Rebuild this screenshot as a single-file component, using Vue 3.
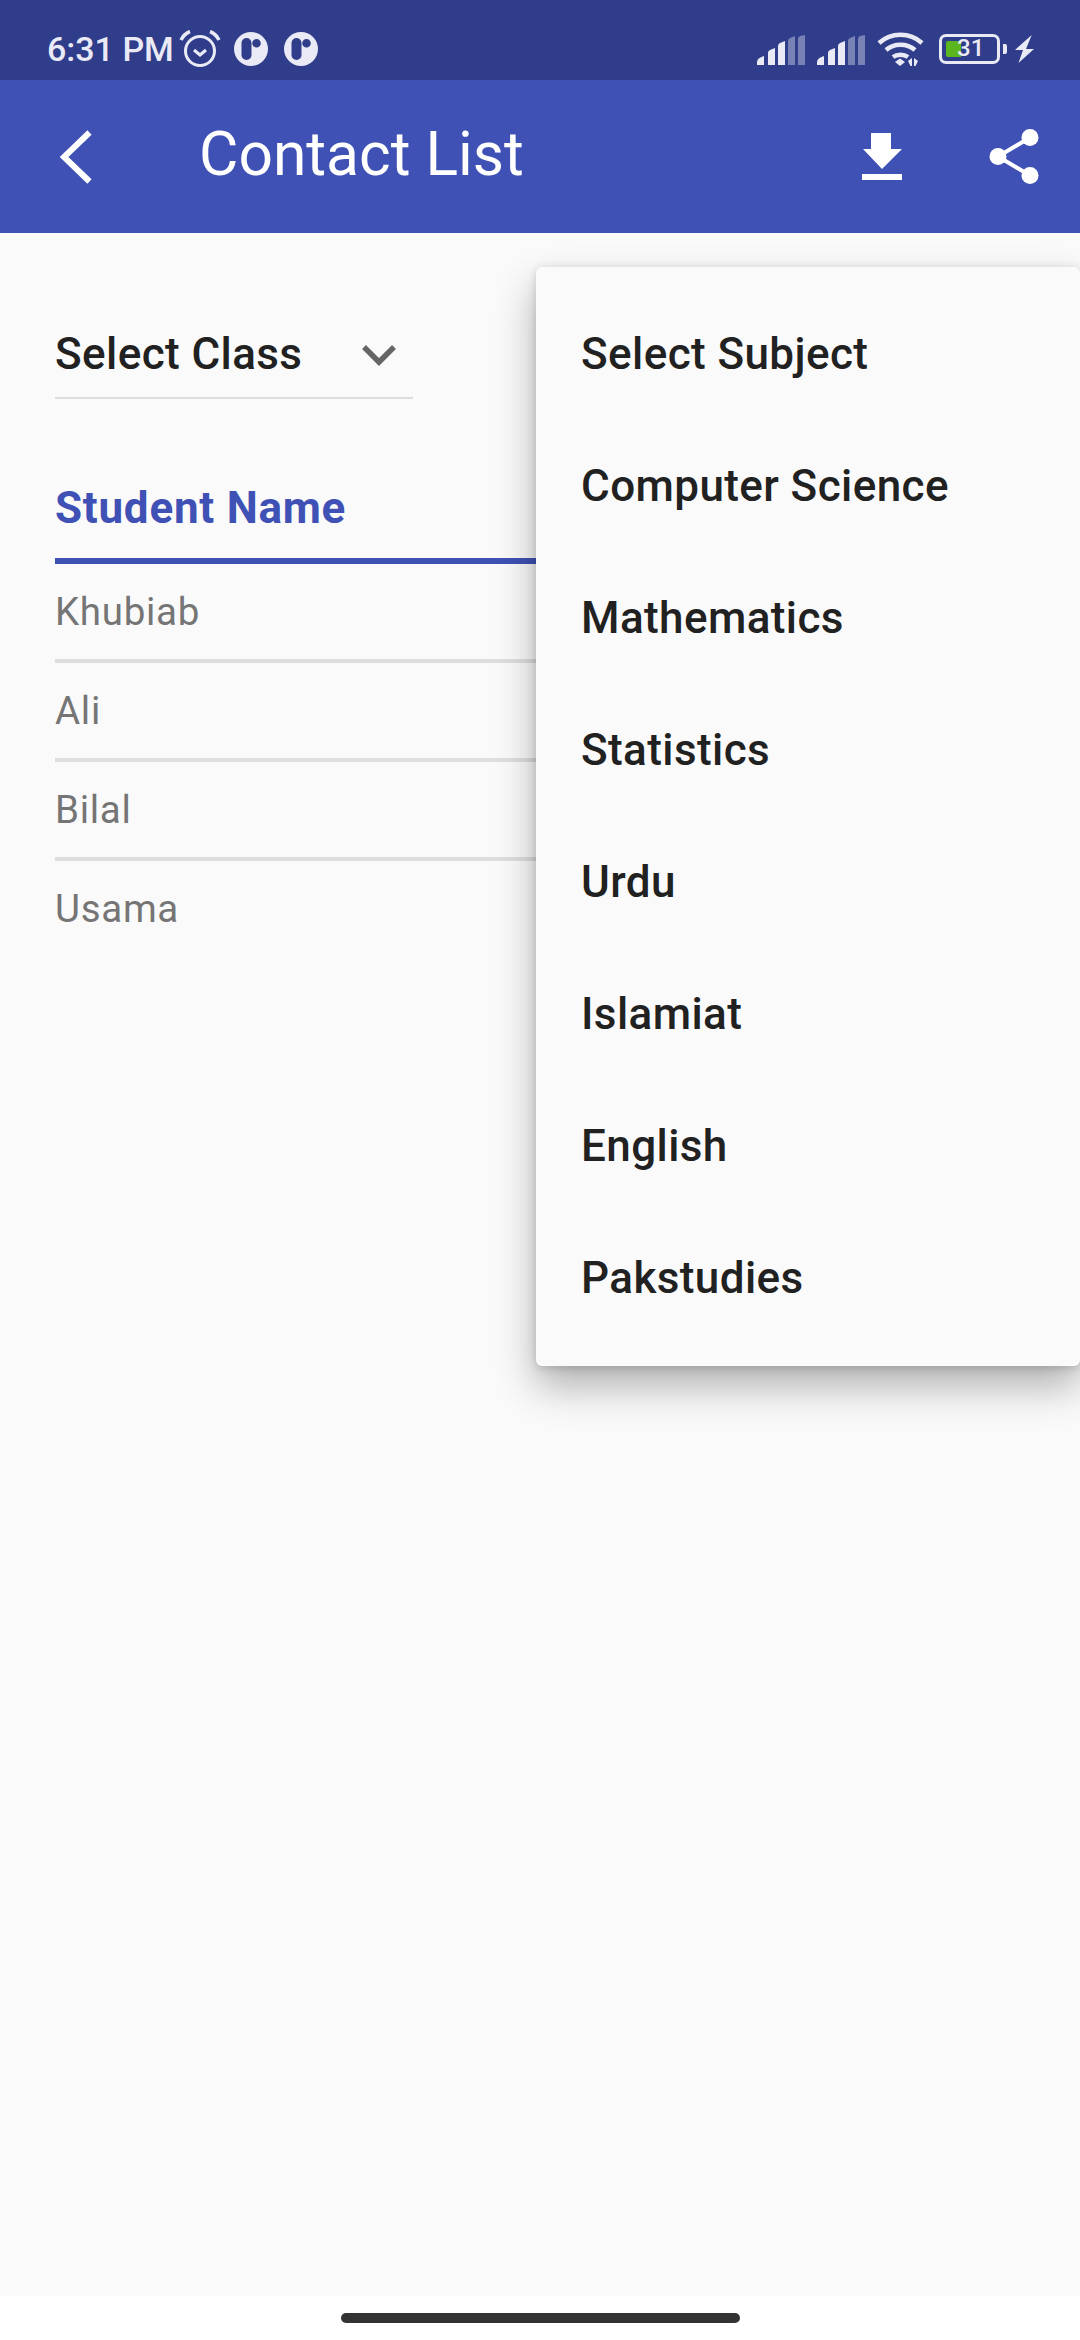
<template>
  <div class="screen">
    <div class="status-bar">
      <div class="status-left">
        <span class="time">6:31 PM</span>
        <svg class="alarm" width="42" height="38" viewBox="0 0 42 38" fill="none" stroke="#e9eaf5">
          <circle cx="21" cy="21" r="14.500" stroke-width="3" />
          <path d="M15 20l6 5 6-5" stroke-width="3" />
          <path d="M2 10c2-4 5-7 9-8.500M40 10c-2-4-5-7-9-8.500" stroke-width="3.500" />
        </svg>
        <svg v-for="n in 2" :key="n" class="dot-app" width="34" height="34" viewBox="0 0 34 34">
          <path
            fill="#e9eaf5"
            fill-rule="evenodd"
            d="M17 0a17 17 0 1 1 0 34a17 17 0 1 1 0-34zM12.500 6a5 5 0 0 0-5 5v12a5 5 0 0 0 10 0v-12a5 5 0 0 0-5-5zM22.500 7a4.300 4.300 0 1 0 0 8.600a4.300 4.300 0 1 0 0-8.600z"
          />
        </svg>
      </div>
      <div class="status-right">
        <svg v-for="n in 2" :key="n" class="signal" width="48" height="30" viewBox="0 0 48 30">
          <path fill="#e9eaf5" d="M0 30v-3q0-4 7-6v9zM11 30v-12q0-2 2-3l5-2v17zM21 30v-19q0-2 2-3l5-2v24z" />
          <path fill="#e9eaf5" opacity="0.4" d="M31 30v-24q0-2 2-3l5-2v29zM41 30v-26q0-2 2-3l5-1v30z" />
        </svg>
        <svg class="wifi" width="47" height="36" viewBox="0 0 47 36" fill="none" stroke="#e9eaf5" stroke-width="4.500">
          <path d="M2 12c12-11 31-11 43 0" />
          <path d="M9 19c8-7 21-7 29 0" />
          <path d="M16 26c4-3 11-3 15 0" />
          <path fill="#e9eaf5" stroke="none" d="M18 31l5-3.500 5 3.500-5 4zM31 30l4-3v8h-1.500zM37 27l4 3-2.500 5h-1.500z" />
        </svg>
        <div class="battery-wrap">
          <div class="battery">
            <span class="battery-fill"></span>
            <span class="battery-num">31</span>
          </div>
          <span class="battery-tip"></span>
        </div>
        <svg class="bolt" width="19" height="29" viewBox="0 0 19 29">
          <path fill="#e9eaf5" d="M16.700 0L0 15h8L3.500 28 19 14h-8z" />
        </svg>
      </div>
    </div>

    <header class="app-bar">
      <svg class="back" width="32" height="54" viewBox="0 0 32 54" fill="none" stroke="#fff" stroke-width="6">
        <path d="M29.500 2.500L4 27l25.500 24.500" />
      </svg>
      <h1 class="title">Contact List</h1>
      <svg class="download" width="40" height="47" viewBox="0 0 40 47">
        <path fill="#fff" d="M9 0h20v16h11L20 36 1 16h8zM0 41h40v6H0z" />
      </svg>
      <svg class="share" width="50" height="55" viewBox="0 0 50 55">
        <g fill="#fff">
          <circle cx="41" cy="8.500" r="8.500" />
          <circle cx="9" cy="27.500" r="8.500" />
          <circle cx="41" cy="46.500" r="8.500" />
        </g>
        <path fill="none" stroke="#fff" stroke-width="4" d="M41 8.500L9 27.500l32 19" />
      </svg>
    </header>

    <main class="content">
      <div class="select-class">
        <span>Select Class</span>
        <svg class="chevron" width="34" height="22" viewBox="0 0 34 22" fill="none" stroke="#666" stroke-width="5.500">
          <path d="M2 3l15 15L32 3" />
        </svg>
      </div>

      <div class="table">
        <div class="table-head">Student Name</div>
        <div v-for="(name, i) in students" :key="name" class="table-row" :class="{ last: i === students.length - 1 }">
          {{ name }}
        </div>
      </div>

      <div class="menu">
        <div v-for="subject in subjects" :key="subject" class="menu-item">{{ subject }}</div>
      </div>
    </main>

    <div class="nav-bar">
      <span class="pill"></span>
    </div>
  </div>
</template>

<script setup>
const students = ['Khubiab', 'Ali', 'Bilal', 'Usama']

const subjects = [
  'Select Subject',
  'Computer Science',
  'Mathematics',
  'Statistics',
  'Urdu',
  'Islamiat',
  'English',
  'Pakstudies'
]
</script>

<style>
html,
body {
  margin: 0;
  padding: 0;
  background: #fff;
}
</style>

<style scoped>
.screen {
  width: 1080px;
  height: 2340px;
  display: flex;
  flex-direction: column;
  overflow: hidden;
  font-family: Roboto, 'Liberation Sans', sans-serif;
}

.status-bar {
  height: 80px;
  flex: none;
  box-sizing: border-box;
  display: flex;
  align-items: center;
  justify-content: space-between;
  padding: 18px 46px 0 47px;
  background: #303d8a;
  color: #e9eaf5;
}

.status-left,
.status-right {
  display: flex;
  align-items: center;
}

.time {
  font-size: 34px;
  font-weight: 500;
  line-height: 40px;
  width: 132px;
}

.dot-app {
  margin-left: 16px;
}

.alarm + .dot-app {
  margin-left: 13px;
}

.signal {
  margin-right: 12px;
  margin-top: 1px;
}

.wifi {
  margin-right: 15px;
  margin-top: -1px;
}

.battery-wrap {
  display: flex;
  align-items: center;
  gap: 3px;
}

.battery {
  box-sizing: border-box;
  width: 61px;
  height: 30px;
  border: 3.500px solid #e9eaf5;
  border-radius: 7px;
  position: relative;
  overflow: hidden;
}

.battery-fill {
  position: absolute;
  left: 3.500px;
  top: 3.500px;
  width: 15px;
  height: 16px;
  background: #5ab51f;
  border-radius: 2px 0 0 2px;
}

.battery-num {
  position: absolute;
  left: 15px;
  top: -1px;
  font-size: 24px;
  font-weight: 500;
  line-height: 24px;
}

.battery-tip {
  width: 4px;
  height: 10px;
  background: #e9eaf5;
  border-radius: 0 2px 2px 0;
}

.bolt {
  margin-left: 8px;
}

.app-bar {
  height: 153px;
  flex: none;
  display: flex;
  align-items: center;
  background: #3f51b5;
  color: #fff;
  padding: 0 41px 0 60px;
}

.title {
  margin: -4px 0 0 107px;
  flex: 1;
  font-size: 60.500px;
  font-weight: 400;
  line-height: 70px;
}

.download {
  margin-right: 87px;
}

.content {
  flex: 1;
  position: relative;
  background: #fafafa;
  padding: 0 55px;
}

.select-class {
  box-sizing: border-box;
  width: 358px;
  padding: 96px 17px 18px 0;
  display: flex;
  justify-content: space-between;
  align-items: center;
  border-bottom: 2px solid #dcdcdc;
  font-size: 44px;
  font-weight: 500;
  letter-spacing: 0.41px;
  line-height: 50px;
  color: #212121;
}

.chevron {
  margin-top: 2px;
}

.table-head {
  height: 165px;
  box-sizing: border-box;
  padding-top: 84px;
  border-bottom: 6px solid #3f51b5;
  font-size: 44px;
  letter-spacing: 0.75px;
  font-weight: 700;
  line-height: 50px;
  color: #3f51b5;
}

.table-row {
  box-sizing: border-box;
  height: 99px;
  padding-top: 25px;
  border-bottom: 4px solid #dedede;
  font-size: 38.500px;
  letter-spacing: 0.7px;
  line-height: 46px;
  color: #757575;
}

.table-row.last {
  border-bottom: none;
}

.menu {
  position: absolute;
  top: 34px;
  right: 0;
  width: 544px;
  box-sizing: border-box;
  padding: 21px 0 22px;
  background: #fafafa;
  border-radius: 6px;
  box-shadow: 0 20px 40px rgba(0, 0, 0, 0.3), 0 2px 10px rgba(0, 0, 0, 0.16);
}

.menu-item {
  height: 132px;
  padding-left: 45px;
  display: flex;
  align-items: center;
  font-size: 44px;
  font-weight: 500;
  letter-spacing: 0.41px;
  color: #212121;
}

.nav-bar {
  height: 44px;
  flex: none;
  background: #fff;
  display: flex;
  justify-content: center;
  padding-top: 17px;
  box-sizing: border-box;
}

.pill {
  width: 399px;
  height: 10px;
  border-radius: 5px;
  background: #333;
}
</style>
